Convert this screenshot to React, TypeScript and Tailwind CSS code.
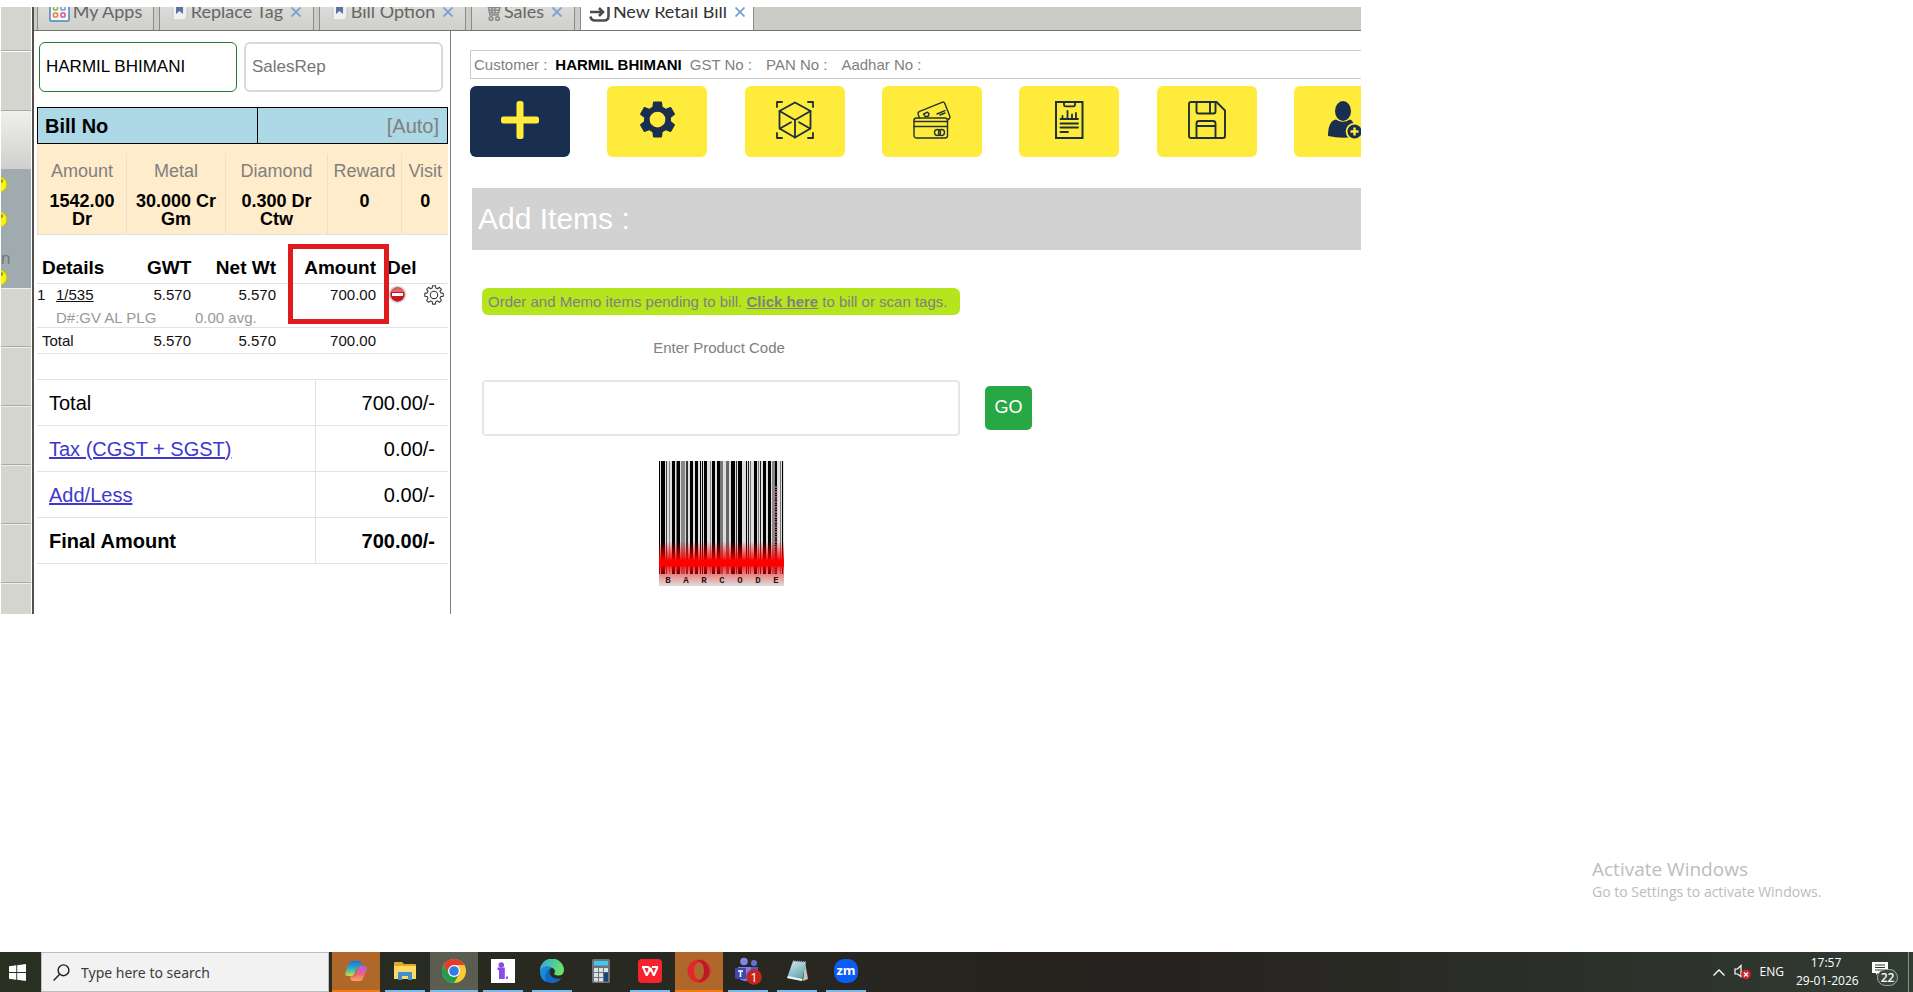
import type { ReactNode } from "react";

const NAVY = "#1a2f50";
const YELLOW = "#ffeb3b";

/* ---------- tab icons ---------- */

function AppsIcon() {
  return (
    <svg width="21" height="21" viewBox="0 0 21 21" aria-hidden="true">
      <rect x="1" y="1" width="19" height="19" rx="1" fill="#f4f8fc" stroke="#4a86c0" strokeWidth="1.5" />
      <rect x="4.5" y="5" width="4" height="4" rx="1" fill="none" stroke="#93b23c" strokeWidth="1.6" />
      <rect x="12" y="5" width="4" height="4" rx="1" fill="none" stroke="#7794d8" strokeWidth="1.6" />
      <rect x="4.5" y="12" width="4" height="4" rx="1" fill="none" stroke="#ee7a45" strokeWidth="1.6" />
      <rect x="12" y="12" width="4" height="4" rx="1" fill="none" stroke="#e0567c" strokeWidth="1.6" />
    </svg>
  );
}

function BookmarkIcon() {
  return (
    <svg width="16" height="20" viewBox="0 0 16 20" aria-hidden="true">
      <path d="M1 1h14v14l-2 4H1z" fill="#eef0f3" stroke="#c4c6c8" strokeWidth="1" />
      <path d="M4 0h7v13l-3.500-3L4 13z" fill="#5a73a0" />
    </svg>
  );
}

function CartIcon() {
  return (
    <svg width="17" height="21" viewBox="0 0 17 21" fill="none" stroke="#8a8a8a" strokeWidth="1.6" aria-hidden="true">
      <path d="M1 4h3l2 10h9M4.500 6.500H16L14.500 12H6M8 7v5M11 7v5M5.500 9.300h9.500" />
      <circle cx="7" cy="17.500" r="1.800" />
      <circle cx="13.500" cy="17.500" r="1.800" />
    </svg>
  );
}

function ArrowBoxIcon() {
  return (
    <svg width="21" height="21" viewBox="0 0 21 21" fill="none" stroke="#4c4c4c" strokeWidth="2.600" aria-hidden="true">
      <path d="M2 6V2h13q4.500 0 4.500 4v9q0 4.500-4.500 4.500H6q-4 0-4.500-4" />
      <path d="M1 11h12M10 7l4 4-4 4" />
    </svg>
  );
}

/* ---------- toolbar icons ---------- */

function PlusIcon() {
  return (
    <svg width="38" height="38" viewBox="0 0 38 38" fill={YELLOW} aria-hidden="true">
      <rect x="15.500" y="0" width="7" height="38" rx="2.500" />
      <rect x="0" y="15.500" width="38" height="7" rx="2.500" />
    </svg>
  );
}

function CogIcon() {
  return (
    <svg width="45" height="45" viewBox="0 0 24 24" fill={NAVY} aria-hidden="true">
      <path d="M19.140 12.940c.040-.300.060-.610.060-.940 0-.320-.020-.640-.070-.940l2.030-1.580a.490.490 0 0 0 .120-.610l-1.920-3.320a.488.488 0 0 0-.590-.220l-2.390.960c-.500-.380-1.030-.700-1.620-.940l-.360-2.540a.484.484 0 0 0-.480-.410h-3.840c-.240 0-.430.170-.470.410l-.360 2.540c-.590.240-1.130.570-1.620.940l-2.390-.960c-.220-.080-.470 0-.590.220L2.740 8.870c-.120.210-.080.470.120.610l2.030 1.580c-.050.300-.090.630-.090.940s.020.640.070.940l-2.030 1.580a.490.490 0 0 0-.120.610l1.920 3.320c.120.220.370.290.590.220l2.390-.960c.500.380 1.030.700 1.620.940l.360 2.540c.050.240.240.410.480.410h3.840c.240 0 .440-.170.470-.410l.360-2.540c.590-.240 1.130-.560 1.620-.940l2.390.960c.220.080.470 0 .590-.220l1.920-3.320c.120-.220.070-.470-.120-.610l-2.010-1.580zM12 16.200A4.200 4.200 0 1 1 12 7.800a4.200 4.200 0 0 1 0 8.400z" />
    </svg>
  );
}

function CubeIcon() {
  return (
    <svg width="38" height="38" viewBox="0 0 38 38" fill="none" stroke="#1d3038" strokeWidth="1.800" strokeLinejoin="round" strokeLinecap="round" aria-hidden="true">
      <path d="M1 6V1h5M32 1h5v5M1 32v5h5M37 32v5h-5" />
      <path d="M19 1.500L34.500 10v17.500L19 36.500 3.500 27.500V10z" />
      <path d="M3.500 10L19 19l15.500-9M19 19v17.500M4 27.500l11-6.300M34 27.500l-11-6.300" />
    </svg>
  );
}

function CardsIcon() {
  return (
    <svg width="38" height="38" viewBox="0 0 38 38" fill="none" stroke="#22342f" strokeWidth="1.400" strokeLinejoin="round" strokeLinecap="round" aria-hidden="true">
      <rect x="1" y="17" width="33.500" height="20" rx="2.500" />
      <path d="M1 20.500h33.500M1 25.500h33.500" />
      <circle cx="24.500" cy="31.500" r="3" />
      <circle cx="28.500" cy="31.500" r="3" />
      <path d="M6.500 17L5.200 13.500q-.800-2.300 1.500-3.200L29 1.300q2-.800 2.800 1.200l5 12.800q.700 2.200-2 3.500" />
      <path d="M10.500 13l4-1.800 1.500 1.500-.500 2.300-3 .800zM24 13l8-3.300M27 14l5-2" />
    </svg>
  );
}

function ReportIcon() {
  return (
    <svg width="38" height="38" viewBox="0 0 38 38" fill="none" stroke="#1d3038" strokeWidth="1.800" strokeLinecap="round" aria-hidden="true">
      <path d="M6 1h26.500v36H6z" strokeWidth="2" />
      <path d="M14 1v2.500q0 1.800 1.800 1.800h7.400q1.800 0 1.800-1.800V1" />
      <path d="M10.500 18h17.500M12.500 17v-2M17.500 17v-7M22 17v-3.500M26 17v-5M10.500 22.500h17.500M10.500 26.500h17.500M10.500 31h7.500" />
    </svg>
  );
}

function FloppyIcon() {
  return (
    <svg width="38" height="38" viewBox="0 0 38 38" fill="none" stroke="#1d3038" strokeWidth="1.900" strokeLinejoin="round" aria-hidden="true">
      <path d="M3 1h25.500L37 9.500V35q0 2-2 2H3q-2 0-2-2V3q0-2 2-2z" />
      <path d="M8.500 1v9.500q0 2 2 2h15q2 0 2-2V1M22 1v11.500" />
      <path d="M8.500 37V22.500q0-2.500 2.500-2.500h14q2.500 0 2.500 2.500V37M8.500 25h19" />
    </svg>
  );
}

function AddUserIcon() {
  return (
    <svg width="38" height="38" viewBox="0 0 38 38" aria-hidden="true">
      <ellipse cx="18" cy="10" rx="8" ry="10" fill={NAVY} />
      <path d="M3 35q0-15 8-16.500q6.500 4.500 14 0Q29 20 29 26v10q-13 2-26-1z" fill={NAVY} />
      <circle cx="29.500" cy="30.500" r="8.800" fill={YELLOW} />
      <circle cx="29.500" cy="30.500" r="7" fill={NAVY} />
      <path d="M29.500 26.500v8M25.500 30.500h8" stroke={YELLOW} strokeWidth="2.400" />
    </svg>
  );
}

/* ---------- row icons ---------- */

function NoEntryIcon() {
  return (
    <svg width="19" height="19" viewBox="0 0 19 19" aria-hidden="true">
      <circle cx="9.500" cy="9.500" r="9" fill="#dcdcdc" />
      <circle cx="9.500" cy="9.500" r="7.200" fill="#c9161d" />
      <path d="M3 7a7 6.500 0 0 1 13 0z" fill="#e0666a" />
      <rect x="4" y="8" width="11" height="3" fill="#fff" />
    </svg>
  );
}

function GearOutlineIcon() {
  return (
    <svg width="20" height="20" viewBox="0 0 20 20" fill="none" stroke="#3a3a3a" strokeWidth="1.100" strokeLinejoin="round" aria-hidden="true">
      <path d="M8.600.7h2.800l.4 2.300 1.700.7 1.900-1.400 2 2-1.400 1.900.7 1.700 2.500.4v3l-2.500.3-.7 1.700 1.400 2-2 2-1.900-1.400-1.700.7-.4 2.500H8.600l-.4-2.500-1.700-.7-1.900 1.400-2-2L4 13.300l-.7-1.700L.8 11.300v-3l2.500-.4L4 6.200 2.600 4.300l2-2 1.900 1.400L8.200 3z" />
      <circle cx="10" cy="9.900" r="3.700" />
    </svg>
  );
}

/* ---------- barcode ---------- */

const BARS: [number, number, string][] = [
  [0, 1, "#000"], [2, 4, "#000"], [7, 1, "#444"], [10, 1, "#888"], [13, 3, "#000"], [17, 1, "#777"],
  [18, 3, "#000"], [22, 4, "#888"], [27, 2, "#333"], [31, 3, "#000"], [36, 3, "#000"], [41, 1, "#000"],
  [43, 1, "#000"], [45, 3, "#000"], [51, 1, "#888"], [53, 3, "#000"], [58, 3, "#000"], [61, 3, "#777"],
  [67, 3, "#666"], [72, 4, "#000"], [77, 1, "#333"], [79, 4, "#000"], [87, 1, "#000"], [89, 1, "#222"],
  [91, 1, "#777"], [95, 3, "#000"], [99, 1, "#777"], [101, 1, "#222"], [104, 3, "#000"], [109, 3, "#000"],
  [113, 4, "#888"], [116, 2, "#000"], [121, 1, "#777"], [123, 1, "#000"],
];
const LETTERS = ["B", "A", "R", "C", "O", "D", "E"];

function Barcode() {
  return (
    <svg width="125" height="125" viewBox="0 0 125 125" role="img" aria-label="Barcode">
      <defs>
        <linearGradient id="scan" x1="0" y1="0" x2="0" y2="1">
          <stop offset="0.640" stopColor="#f00" stopOpacity="0" />
          <stop offset="0.780" stopColor="#f00" stopOpacity="0.850" />
          <stop offset="0.790" stopColor="#f00" />
          <stop offset="0.840" stopColor="#f00" />
          <stop offset="0.850" stopColor="#f00" stopOpacity="0.750" />
          <stop offset="0.910" stopColor="#f00" stopOpacity="0.400" />
          <stop offset="1" stopColor="#f00" stopOpacity="0" />
        </linearGradient>
      </defs>
      <rect width="125" height="125" fill="#dedede" />
      {BARS.map(([x, w, fill]) => (
        <rect key={x} x={x} width={w} height="113" fill={fill} />
      ))}
      <path d="M117 25v88" stroke="#c06a78" strokeWidth="3" strokeDasharray="2 1 1 1" opacity="0.700" />
      <rect width="125" height="125" fill="url(#scan)" />
      {LETTERS.map((c, i) => (
        <text key={c} x={9 + i * 18} y="122" textAnchor="middle" fontSize="9" fontWeight="700" fontFamily="Liberation Mono, monospace" fill="#301010">
          {c}
        </text>
      ))}
    </svg>
  );
}

/* ---------- taskbar icons ---------- */

function WindowsLogo() {
  return (
    <svg width="17" height="17" viewBox="0 0 17 17" fill="#fff" aria-hidden="true">
      <path d="M0 2.300L7.300 1.300V8H0zM8.200 1.200L17 0v8H8.200zM0 8.900h7.300v6.800L0 14.700zM8.200 8.900H17V17l-8.800-1.200z" />
    </svg>
  );
}

function MagnifierIcon() {
  return (
    <svg width="17" height="17" viewBox="0 0 17 17" fill="none" stroke="#1c1c1c" strokeWidth="1.400" aria-hidden="true">
      <circle cx="10.500" cy="6.300" r="5.400" />
      <path d="M6.700 10.200L.6 16.400" />
    </svg>
  );
}

function CopilotIcon() {
  return (
    <svg width="24" height="24" viewBox="0 0 24 24" aria-hidden="true">
      <defs>
        <linearGradient id="cpA" x1="0" y1="0" x2="0" y2="1">
          <stop offset="0" stopColor="#1a6fe0" />
          <stop offset="0.500" stopColor="#23b5c9" />
          <stop offset="1" stopColor="#d8d63a" />
        </linearGradient>
        <linearGradient id="cpB" x1="0" y1="0" x2="0" y2="1">
          <stop offset="0" stopColor="#a566e8" />
          <stop offset="0.500" stopColor="#ee5d8a" />
          <stop offset="1" stopColor="#fca45c" />
        </linearGradient>
      </defs>
      <path d="M8 2h7q2 0 2.600 2l.900 2.500h-3q-2 0-2.600 2L10.500 15q-.500 2-2.500 2H4Q.5 17 1.500 13L5 4.500Q6 2 8 2z" fill="url(#cpA)" />
      <path d="M16 22H9q-2 0-2.500-2L6 17.500h3q2 0 2.500-2L13.700 9q.500-2 2.500-2H20q3.500 0 2.500 4L19 19.500Q18 22 16 22z" fill="url(#cpB)" />
    </svg>
  );
}

function FolderIcon() {
  return (
    <svg width="22" height="20" viewBox="0 0 22 20" aria-hidden="true">
      <path d="M0 2q0-1 1-1h7l2 2h11q1 0 1 1v13H0z" fill="#e5a823" />
      <path d="M0 5h22v13H0z" fill="#fbd968" />
      <path d="M4 19v-7q0-1 1-1h12q1 0 1 1v7h-4v-4H8v4z" fill="#3f8fd0" />
    </svg>
  );
}

function ChromeIcon() {
  return (
    <svg width="24" height="24" viewBox="0 0 24 24" aria-hidden="true">
      <circle cx="12" cy="12" r="12" fill="#fcc934" />
      <path d="M1.600 6A12 12 0 0 1 22.400 6H12L6.800 15z" fill="#e33b2e" />
      <path d="M1.600 6A12 12 0 0 0 12 24l5.200-9L12 17 6.800 15z" fill="#1e9e50" />
      <circle cx="12" cy="12" r="6" fill="#fff" />
      <circle cx="12" cy="12" r="4.800" fill="#2f7be8" />
    </svg>
  );
}

function IAppIcon() {
  return (
    <svg width="24" height="24" viewBox="0 0 24 24" fill="#8b4bea" aria-hidden="true">
      <rect width="24" height="24" fill="#fff" />
      <circle cx="10.300" cy="6" r="2.800" />
      <path d="M6.500 8.500h7.300V20H8V11H6.500z" />
      <rect x="15" y="17.500" width="2" height="2.500" />
    </svg>
  );
}

function EdgeIcon() {
  return (
    <svg width="24" height="24" viewBox="0 0 24 24" aria-hidden="true">
      <defs>
        <linearGradient id="edG" x1="0" y1="0" x2="1" y2="0.300">
          <stop offset="0" stopColor="#2ba7e0" />
          <stop offset="1" stopColor="#6ae06a" />
        </linearGradient>
      </defs>
      <path d="M0 12A12 12 0 0 0 12 24q6 0 9.500-5Q18 20.500 14 19q-4.500-2-4.500-6 0-3 2.500-4.500Q4 5 0 12z" fill="#1268c0" />
      <path d="M0 12A12 12 0 0 1 24 11q0 5.500-6 5.500-4.500 0-3.500-2.500 1.500-3.500-2-5Q4 5.500 0 12z" fill="url(#edG)" />
      <path d="M0 12q0 8 6 11-2-7 1-11 2-3 5-3.500Q4 5 0 12z" fill="#1b8ad8" />
    </svg>
  );
}

function CalculatorIcon() {
  return (
    <svg width="18" height="24" viewBox="0 0 18 24" aria-hidden="true">
      <rect width="18" height="24" rx="1.500" fill="#6d7479" />
      <rect x="2" y="2" width="14" height="4.500" fill="#46c6ee" />
      <path d="M2 9h4v4H2zM7 9h4v4H7zM12 9h4v4h-4zM2 14h4v4H2zM7 14h4v4H7zM2 19h4v3.500H2zM7 19h4v3.500H7z" fill="#dfe2e4" />
      <rect x="12" y="13.500" width="4" height="9" fill="#16457e" />
    </svg>
  );
}

function WpsIcon() {
  return (
    <svg width="24" height="24" viewBox="0 0 24 24" aria-hidden="true">
      <rect width="24" height="24" rx="4" fill="#f6222d" />
      <path d="M4 8h6.500l2 4.500M5 8l3.700 8.500L12.500 9l3.300 7.500L19.500 8H14" fill="none" stroke="#fff" strokeWidth="2" strokeLinejoin="bevel" />
    </svg>
  );
}

function OperaIcon() {
  return (
    <svg width="24" height="24" viewBox="0 0 24 24" aria-hidden="true">
      <path fillRule="evenodd" d="M12 .5a11.500 11.500 0 1 0 0 23 11.500 11.500 0 0 0 0-23zm0 3c3 0 5 4 5 8.500s-2 8.500-5 8.500-5-4-5-8.500 2-8.500 5-8.500z" fill="#e0272d" />
      <path d="M14 1a11.500 11.500 0 0 1 0 22q-2 .500-4-1 7 .500 7-10T10 2q2-1.500 4-1z" fill="#b81c22" />
    </svg>
  );
}

function TeamsIcon() {
  return (
    <svg width="28" height="28" viewBox="0 0 28 28" aria-hidden="true">
      <circle cx="10" cy="4.500" r="3.800" fill="#7f87e4" />
      <circle cx="20" cy="6" r="3" fill="#6a70d0" />
      <path d="M4 10h13v12q-6 5-13-1z" fill="#7b83eb" />
      <path d="M17 10h7v8h-7z" fill="#5059c9" />
      <rect x="1" y="11" width="11" height="11" rx="1" fill="#3f48b0" />
      <path d="M4 14h5M6.500 14v6" stroke="#fff" strokeWidth="1.600" />
      <circle cx="20" cy="20" r="7.800" fill="#c4261d" />
      <text x="20" y="24.500" textAnchor="middle" fontSize="13" fill="#fff" fontFamily="Open Sans, sans-serif">1</text>
    </svg>
  );
}

function NotepadIcon() {
  return (
    <svg width="24" height="24" viewBox="0 0 24 24" aria-hidden="true">
      <defs>
        <linearGradient id="npG" x1="0" y1="0" x2="0.500" y2="1">
          <stop offset="0" stopColor="#d6f0f4" />
          <stop offset="1" stopColor="#5fa3b0" />
        </linearGradient>
      </defs>
      <path d="M20 3l3 17-5 2z" fill="#c8c3b4" />
      <path d="M8 2l13 1-4 19-15-3z" fill="url(#npG)" />
      <path d="M2 19l15 3 .5-2L3 17z" fill="#eef6f6" />
      <path d="M8 2l13 1" stroke="#8e9a9c" strokeWidth="1.500" strokeDasharray="1 1" />
    </svg>
  );
}

function ZoomAppIcon() {
  return (
    <svg width="24" height="24" viewBox="0 0 24 24" aria-hidden="true">
      <rect width="24" height="24" rx="10" fill="#0b5cf5" />
      <text x="12" y="16" textAnchor="middle" fontSize="13" fontWeight="700" fill="#fff" fontFamily="Open Sans, sans-serif">zm</text>
    </svg>
  );
}

/* ---------- data ---------- */

const TABS: { label: string; icon: ReactNode; width: string; closable: boolean; active?: boolean }[] = [
  { label: "My Apps", icon: <AppsIcon />, width: "w-[117px]", closable: false },
  { label: "Replace Tag", icon: <BookmarkIcon />, width: "w-[155px]", closable: true },
  { label: "Bill Option", icon: <BookmarkIcon />, width: "w-[147px]", closable: true },
  { label: "Sales", icon: <CartIcon />, width: "w-[104px]", closable: true },
  { label: "New Retail Bill", icon: <ArrowBoxIcon />, width: "w-[174px]", closable: true, active: true },
];

const SUMMARY = [
  { label: "Amount", value: "1542.00 Dr", width: "w-[89px]" },
  { label: "Metal", value: "30.000 Cr Gm", width: "w-[99px]" },
  { label: "Diamond", value: "0.300 Dr Ctw", width: "w-[102px]" },
  { label: "Reward", value: "0", width: "w-[74px]" },
  { label: "Visit", value: "0", width: "w-[47px]" },
];

const TOTALS = [
  { label: "Total", value: "700.00/-", kind: "plain" },
  { label: "Tax (CGST + SGST)", value: "0.00/-", kind: "link" },
  { label: "Add/Less", value: "0.00/-", kind: "link" },
  { label: "Final Amount", value: "700.00/-", kind: "bold" },
];

const TOOLS = [
  { name: "Add item", icon: <PlusIcon />, primary: true },
  { name: "Settings", icon: <CogIcon /> },
  { name: "Products", icon: <CubeIcon /> },
  { name: "Payment", icon: <CardsIcon /> },
  { name: "Report", icon: <ReportIcon /> },
  { name: "Save", icon: <FloppyIcon /> },
  { name: "Add customer", icon: <AddUserIcon /> },
];

const TASKS: { name: string; icon: ReactNode; state: "idle" | "open" | "active" | "alert" }[] = [
  { name: "Copilot", icon: <CopilotIcon />, state: "alert" },
  { name: "File Explorer", icon: <FolderIcon />, state: "open" },
  { name: "Chrome", icon: <ChromeIcon />, state: "active" },
  { name: "iApp", icon: <IAppIcon />, state: "open" },
  { name: "Edge", icon: <EdgeIcon />, state: "open" },
  { name: "Calculator", icon: <CalculatorIcon />, state: "idle" },
  { name: "WPS Office", icon: <WpsIcon />, state: "open" },
  { name: "Opera", icon: <OperaIcon />, state: "alert" },
  { name: "Teams", icon: <TeamsIcon />, state: "open" },
  { name: "Notepad", icon: <NotepadIcon />, state: "open" },
  { name: "Zoom", icon: <ZoomAppIcon />, state: "open" },
];

const TASK_BG = { idle: "", open: "", active: "bg-[#5a5d4f]", alert: "bg-[#b0672a]" };
const TASK_LINE = {
  idle: "w-0",
  open: "w-10 bg-[#76b9ed]",
  active: "w-12 bg-[#76b9ed]",
  alert: "w-12 bg-[#f57c14]",
};

/* ---------- sections ---------- */

function Smiley() {
  return (
    <svg width="7" height="17" viewBox="0 0 7 17" className="block" aria-hidden="true">
      <circle cx="-2" cy="8.500" r="7.800" fill="#fbf500" stroke="#c9c400" />
      <path d="M1 3.500v3" stroke="#5a5600" strokeWidth="1.200" />
    </svg>
  );
}

function SideMenu() {
  return (
    <nav aria-label="Menu" className="ml-px flex w-[30px] shrink-0 flex-col overflow-hidden bg-[#d4d5cf]">
      <div className="h-11 border-b border-[#a9aaa5]" />
      <div className="h-[60px] border-t border-b border-t-white border-b-[#a9aaa5]" />
      <div className="h-[58px] bg-linear-to-b from-[#f0f0ef] to-[#cfd0cd]" />
      <div className="flex h-[119px] flex-col bg-[#a0abb0] pt-[7px] text-[17px] leading-[20px] text-[#777]">
        <Smiley />
        <div className="pt-[18px]">
          <Smiley />
        </div>
        <div className="pt-[21px]">n</div>
        <Smiley />
      </div>
      {[0, 1, 2, 3, 4].map((i) => (
        <div key={i} className="h-[59px] shrink-0 border-t border-b border-t-[#eeeeea] border-b-[#a9aaa5]" />
      ))}
      <div className="border-t border-[#eeeeea]" />
    </nav>
  );
}

function TabBar() {
  return (
    <div className="flex h-6 items-end gap-[5px] overflow-hidden border-b border-[#747474] bg-[#cbccc7] pl-[3px] font-[Lato,sans-serif] text-[18px] leading-[22px]">
      {TABS.map((t) => (
        <div
          key={t.label}
          className={
            (t.active
              ? "border-[#8a8a8a] bg-white text-[#333] "
              : "border-[#8a8a8a] bg-linear-to-b from-[#e2e2de] to-[#cfd0cb] text-[#666] ") +
            "flex h-9 shrink-0 items-center justify-center gap-[3px] border-x pb-[2px] " +
            t.width
          }
        >
          {t.icon}
          <button type="button" className="whitespace-nowrap">{t.label}</button>
          {t.closable && (
            <button type="button" aria-label={"Close " + t.label} className="pt-[2px] pl-[5px]">
              <svg width="10" height="10" viewBox="0 0 10 10" stroke="#7a9fd0" strokeWidth="1.800" aria-hidden="true">
                <path d="M.5.500l9 9M9.500.500l-9 9" />
              </svg>
            </button>
          )}
        </div>
      ))}
    </div>
  );
}

function BillPanel() {
  return (
    <aside className="w-[417px] shrink-0 border-r border-[#7d7d7d] pt-[11px] pr-[2px] pl-[3px]">
      <div className="flex gap-[7px] pl-[2px]">
        <input
          aria-label="Customer name"
          defaultValue="HARMIL BHIMANI"
          className="h-[50px] w-[198px] rounded-md border border-[#1f7a33] px-[6px] text-[17px] text-black outline-none"
        />
        <input
          aria-label="Sales representative"
          placeholder="SalesRep"
          className="h-[50px] w-[199px] rounded-md border-2 border-[#d9d9d9] px-[6px] text-[17px] outline-none placeholder:text-[#757575]"
        />
      </div>

      <div className="mt-[15px] flex h-[37px] items-center border border-black bg-[#add8e6] text-[20px]">
        <div className="flex h-full w-[220px] items-center border-r border-black pl-[7px] font-bold text-black">Bill No</div>
        <div className="flex-1 pr-2 text-right text-[#808080]">[Auto]</div>
      </div>

      <div className="border-b border-[#e3e0da] bg-[#ffecca] pt-[10px]">
        <table className="w-full table-fixed border-collapse text-center text-[18px]">
          <thead>
            <tr>
              {SUMMARY.map((s) => (
                <th key={s.label} className={"h-[38px] border-l border-[#ecdfce] p-0 pb-1 align-middle leading-[20px] font-normal text-[#808080] " + s.width}>
                  {s.label}
                </th>
              ))}
            </tr>
          </thead>
          <tbody>
            <tr>
              {SUMMARY.map((s) => (
                <td key={s.label} className="h-[42px] border-l border-[#ecdfce] px-2 align-top leading-[18px] font-bold text-black">
                  {s.value}
                </td>
              ))}
            </tr>
          </tbody>
        </table>
      </div>

      <div className="relative">
        <table className="w-full table-fixed border-collapse text-right text-[15px] leading-[20px] text-[#111]">
          <colgroup>
            <col className="w-[110px]" />
            <col className="w-[44px]" />
            <col className="w-[85px]" />
            <col className="w-[100px]" />
            <col className="w-[36px]" />
            <col className="w-[36px]" />
          </colgroup>
          <thead>
            <tr className="border-b border-[#e2e2e2] text-[19px] leading-[24px] text-black">
              <th className="pt-[21px] pb-[3px] pl-[5px] text-left">Details</th>
              <th className="pt-[21px] pb-[3px]">GWT</th>
              <th className="pt-[21px] pb-[3px]">Net Wt</th>
              <th className="pt-[21px] pb-[3px]">Amount</th>
              <th colSpan={2} className="pt-[21px] pb-[3px] pl-[11px] text-left">Del</th>
            </tr>
          </thead>
          <tbody>
            <tr>
              <td className="pt-px text-left">
                <span className="inline-block w-[19px]">1</span>
                <a href="#item" className="underline">1/535</a>
              </td>
              <td className="pt-px">5.570</td>
              <td className="pt-px">5.570</td>
              <td className="pt-px">700.00</td>
              <td className="pl-3 align-middle">
                <button type="button" aria-label="Delete item" className="flex">
                  <NoEntryIcon />
                </button>
              </td>
              <td className="pl-3 align-middle">
                <button type="button" aria-label="Item settings" className="flex">
                  <GearOutlineIcon />
                </button>
              </td>
            </tr>
            <tr className="border-b border-[#e2e2e2] text-left leading-[18px] text-[#999]">
              <td colSpan={2} className="pt-1 pl-[19px]">D#:GV AL PLG</td>
              <td colSpan={4} className="pt-1 pl-1">0.00 avg.</td>
            </tr>
            <tr className="border-b border-[#e2e2e2]">
              <td className="pt-[3px] pb-[2px] pl-[5px] text-left">Total</td>
              <td className="pt-[3px] pb-[2px]">5.570</td>
              <td className="pt-[3px] pb-[2px]">5.570</td>
              <td className="pt-[3px] pb-[2px]">700.00</td>
              <td colSpan={2} />
            </tr>
          </tbody>
        </table>
        <div className="pointer-events-none absolute top-[9px] left-[251px] h-20 w-[101px] border-[5px] border-[#e01b1f]" />
      </div>

      <table className="mt-[25px] w-full table-fixed border-collapse text-[20px]">
        <tbody>
          {TOTALS.map((t) => (
            <tr key={t.label} className={"h-[46px] border-y border-[#e2e2e2] text-black " + (t.kind === "bold" ? "font-bold" : "")}>
              <td className="w-[278px] border-r border-[#e2e2e2] pl-3">
                {t.kind === "link" ? (
                  <a href="#details" className="text-[#4038cc] underline">{t.label}</a>
                ) : (
                  t.label
                )}
              </td>
              <td className="pr-[13px] text-right">{t.value}</td>
            </tr>
          ))}
        </tbody>
      </table>
    </aside>
  );
}

function WorkArea() {
  return (
    <main className="min-w-0 flex-1 overflow-hidden pt-[19px] pb-[28px] pl-[19px] text-[15px] leading-[20px] text-[#808080]">
      <div className="flex h-[29px] items-center border border-r-0 border-[#ccc] pl-[3px] whitespace-nowrap">
        <span>Customer :</span>
        <strong className="pl-2 text-black">HARMIL BHIMANI</strong>
        <span className="pl-2">GST No :</span>
        <span className="pl-[14px]">PAN No :</span>
        <span className="pl-[14px]">Aadhar No :</span>
      </div>

      <div className="mt-[7px] flex w-[924px] justify-between">
        {TOOLS.map((t) => (
          <button
            key={t.name}
            type="button"
            aria-label={t.name}
            className={
              "flex h-[71px] w-[100px] shrink-0 items-center justify-center rounded-md pb-1 " +
              (t.primary ? "bg-[#1a2f50]" : "bg-[#ffeb3b]")
            }
          >
            {t.icon}
          </button>
        ))}
      </div>

      <h1 className="mt-[31px] ml-[2px] flex h-[62px] items-center bg-[#d2d2d2] pl-[6px] text-[30px] text-white">Add Items :</h1>

      <form className="mt-[38px] pl-3" onSubmit={(e) => e.preventDefault()}>
        <p className="flex h-[27px] w-[478px] items-center rounded-md bg-[#b5e61d] pl-[6px] whitespace-pre">
          Order and Memo items pending to bill. <a href="#pending" className="font-bold underline">Click here</a> to bill or scan tags.
        </p>
        <label htmlFor="code" className="mt-[23px] block w-[474px] text-center">Enter Product Code</label>
        <div className="mt-[22px] flex items-center gap-[25px]">
          <input id="code" className="h-14 w-[478px] rounded-sm border-2 border-[#e6e8e8] px-3 outline-none" />
          <button type="submit" className="h-11 w-[47px] rounded-[5px] bg-[#28a745] pb-[2px] text-[18px] text-white">GO</button>
        </div>
        <div className="mt-[25px] flex w-[479px] justify-center">
          <Barcode />
        </div>
      </form>
    </main>
  );
}

function Taskbar() {
  return (
    <footer className="flex h-10 shrink-0 bg-linear-to-r from-[#2a3123] via-[#26221f] via-60% to-[#303b32] font-['Open_Sans',sans-serif] text-white">
      <button type="button" aria-label="Start" className="flex w-[41px] items-center justify-center pr-[7px]">
        <WindowsLogo />
      </button>
      <label className="flex w-[288px] items-center gap-[11px] border border-[#bdbdbd] bg-[#f2f2f2] pl-[11px]">
        <MagnifierIcon />
        <input
          aria-label="Search"
          placeholder="Type here to search"
          className="min-w-0 flex-1 bg-transparent font-['Noto_Sans',sans-serif] text-[14px] outline-none placeholder:text-[#3c3c3c]"
        />
      </label>
      <div className="flex gap-px pl-[3px]">
        {TASKS.map((t) => (
          <button
            key={t.name}
            type="button"
            aria-label={t.name}
            className={"flex w-12 flex-col items-center justify-between " + TASK_BG[t.state]}
          >
            <span className="flex flex-1 items-center">{t.icon}</span>
            <span className={"h-[2px] " + TASK_LINE[t.state]} />
          </button>
        ))}
      </div>
      <div className="flex flex-1 items-center justify-end text-[12px] leading-[18px]">
        <svg width="12" height="7" viewBox="0 0 12 7" fill="none" stroke="#fff" strokeWidth="1.300" aria-hidden="true">
          <path d="M.5 6.500L6 1l5.500 5.500" />
        </svg>
        <svg width="18" height="16" viewBox="0 0 18 16" className="ml-[9px]" aria-hidden="true">
          <path d="M1 5h2.500L7 1.500v11L3.500 10H1z" fill="none" stroke="#fff" strokeWidth="1.200" />
          <circle cx="12" cy="10.500" r="4.800" fill="#d5222d" />
          <path d="M10 8.500l4 4M14 8.500l-4 4" stroke="#fff" strokeWidth="1.300" />
        </svg>
        <span className="ml-2">ENG</span>
        <div className="ml-3 w-[60px] text-center whitespace-nowrap">
          <div>17:57</div>
          <div>29-01-2026</div>
        </div>
        <button type="button" aria-label="Notifications" className="mt-1 mr-[9px] ml-[15px]">
          <svg width="28" height="26" viewBox="0 0 28 26" aria-hidden="true">
            <path d="M1 1h16v11H7l-2 2v-2H1z" fill="#fff" />
            <path d="M4 4h10M4 6.500h10M4 9h8" stroke="#2f3a2f" strokeWidth="1.200" />
            <rect x="6.500" y="8.500" width="20" height="16" rx="8" fill="#3c4640" stroke="#a5aaa6" />
            <text x="16.500" y="21" textAnchor="middle" fontSize="12" fontWeight="600" fill="#fff" fontFamily="Open Sans, sans-serif">22</text>
          </svg>
        </button>
        <div className="h-full w-[5px] border-l border-[#8a8f88]" />
      </div>
    </footer>
  );
}

export default function App() {
  return (
    <div className="flex min-h-screen flex-col bg-white pt-[7px] font-['Liberation_Sans',Arial,sans-serif]">
      <div className="flex w-[71.15%] overflow-hidden">
        <SideMenu />
        <div className="ml-px flex min-w-0 flex-1 flex-col border-l-2 border-[#55504c]">
          <TabBar />
          <div className="flex flex-1">
            <BillPanel />
            <WorkArea />
          </div>
        </div>
      </div>

      <div className="flex flex-1 items-end justify-end pr-[85px] pb-[50px] font-['Open_Sans',sans-serif] text-[#bcbcbc]">
        <div className="w-[236px] whitespace-nowrap">
          <div className="text-[19px] leading-[26px]">Activate Windows</div>
          <div className="text-[14px] leading-[20px]">Go to Settings to activate Windows.</div>
        </div>
      </div>

      <Taskbar />
    </div>
  );
}
